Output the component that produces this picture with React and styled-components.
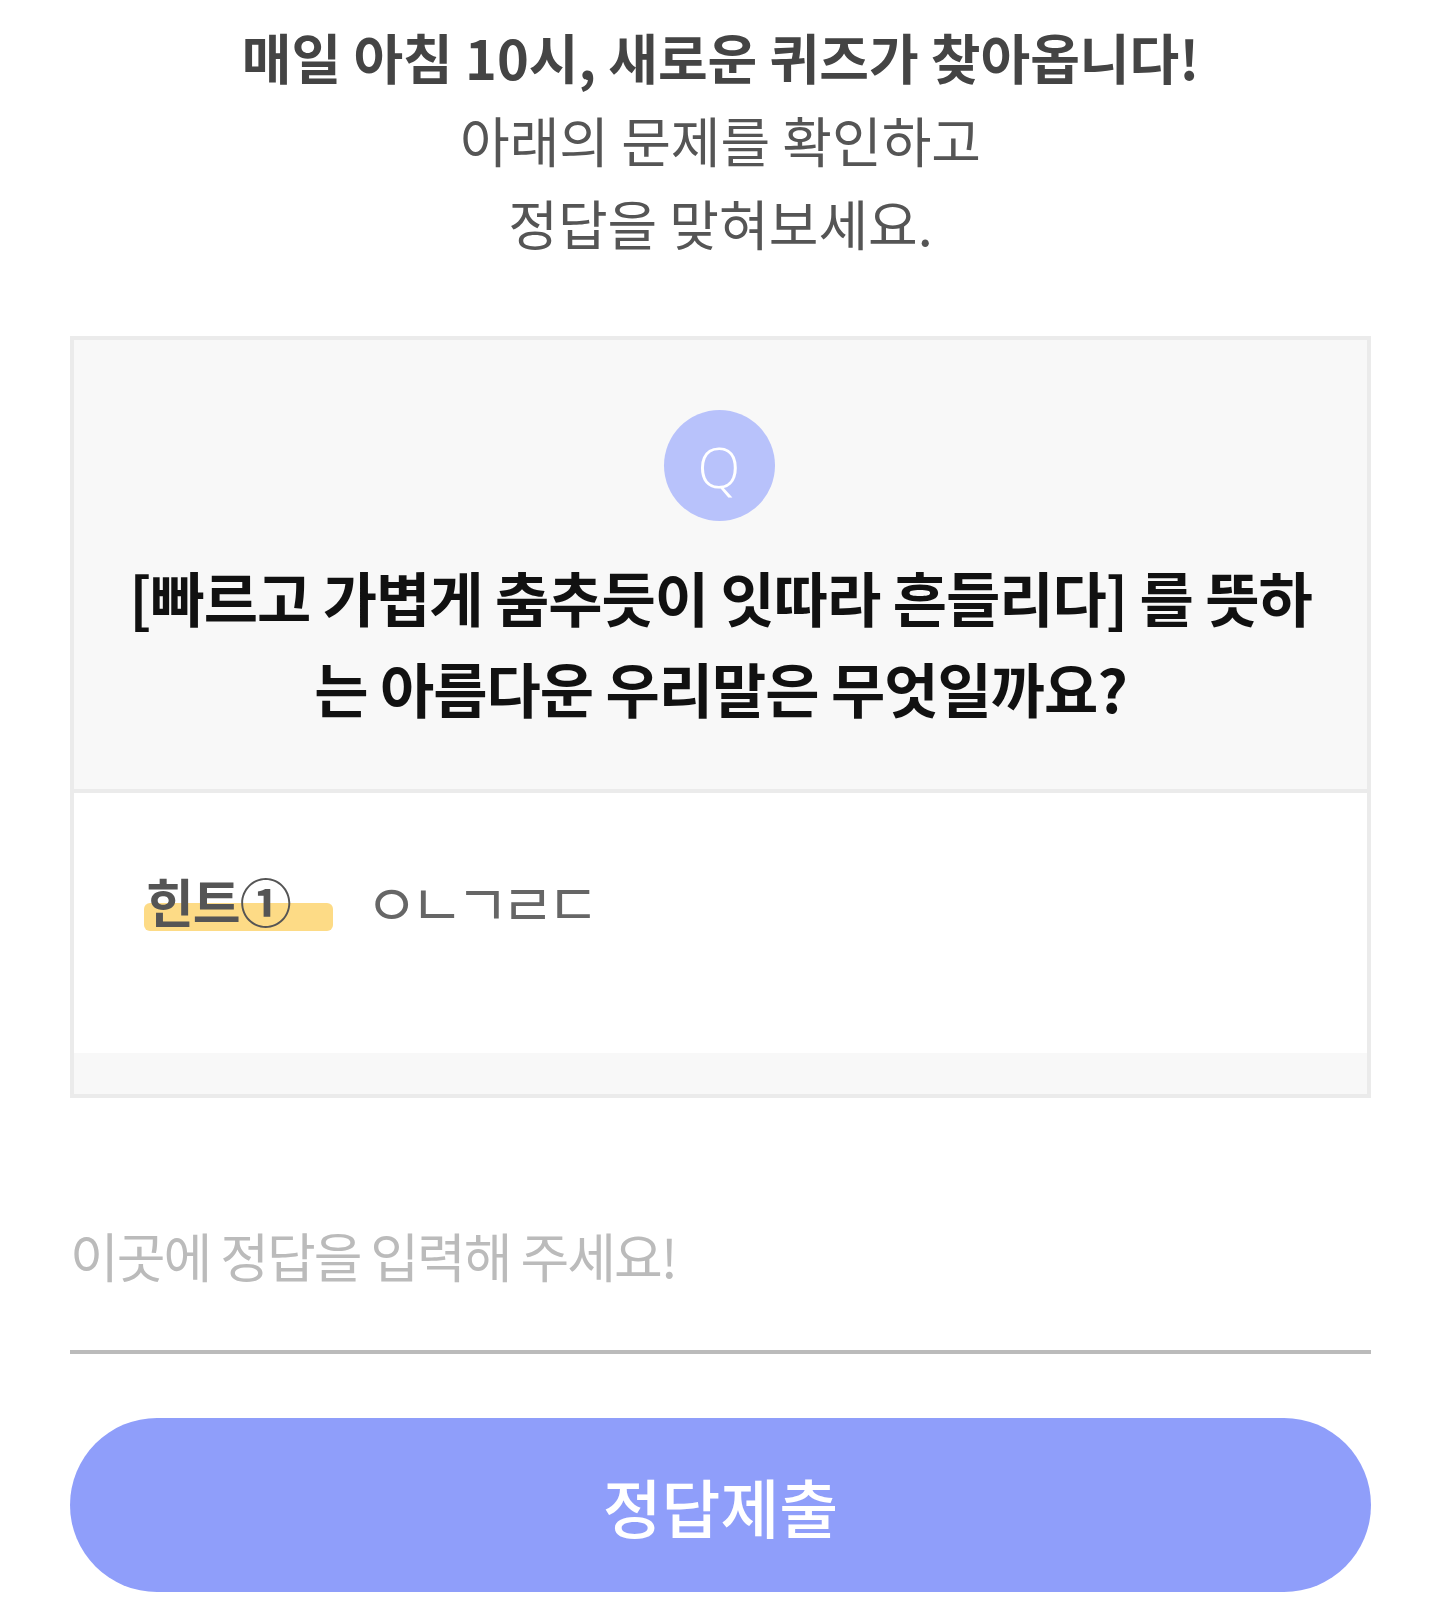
import styled, { createGlobalStyle } from "styled-components";

const GlobalStyle = createGlobalStyle`
  body {
    margin: 0;
    background: #ffffff;
    font-family: "Noto Sans CJK KR", "Noto Sans", sans-serif;
  }
`;

function App() {
  return (
    <>
      <GlobalStyle />
      <Page>
        <Intro>
          <h1>매일 아침 10시, 새로운 퀴즈가 찾아옵니다!</h1>
          <p>
            아래의 문제를 확인하고
            <br />
            정답을 맞혀보세요.
          </p>
        </Intro>

        <QuizCard>
          <QuestionArea>
            <QBadge>Q</QBadge>
            <QuestionText>
              [빠르고 가볍게 춤추듯이 잇따라 흔들리다] 를 뜻하는 아름다운 우리말은 무엇일까요?
            </QuestionText>
          </QuestionArea>
          <HintArea>
            <HintRow>
              <HintLabel>힌트①</HintLabel>
              <HintLetters>ㅇㄴㄱㄹㄷ</HintLetters>
            </HintRow>
          </HintArea>
          <CardFoot />
        </QuizCard>

        <AnswerInput type="text" placeholder="이곳에 정답을 입력해 주세요!" />
        <SubmitButton type="button">정답제출</SubmitButton>
      </Page>
    </>
  );
}

const Page = styled.div`
  display: flex;
  flex-direction: column;
  padding: 15px 68px 30px 70px;
`;

const Intro = styled.div`
  text-align: center;
  & h1 {
    margin: 0;
    font-size: 54px;
    line-height: 83px;
    font-weight: 700;
    color: #444444;
  }
  & p {
    margin: 0;
    font-size: 54px;
    line-height: 83px;
    font-weight: 400;
    color: #555555;
  }
`;

const QuizCard = styled.div`
  margin-top: 72px;
  border: 4px solid #ebebeb;
  background: #f8f8f8;
  display: flex;
  flex-direction: column;
`;

const QuestionArea = styled.div`
  display: flex;
  flex-direction: column;
  align-items: center;
  padding: 70px 50px 56px;
`;

const QBadge = styled.div`
  width: 111px;
  height: 111px;
  margin-right: 3px;
  border-radius: 50%;
  background: #b8c2fb;
  color: #ffffff;
  display: flex;
  align-items: center;
  justify-content: center;
  font-family: "Open Sans", "Noto Sans", sans-serif;
  font-weight: 300;
  font-size: 56px;
`;

const QuestionText = styled.p`
  margin: 30px 0 0;
  text-align: center;
  font-size: 59px;
  line-height: 91px;
  font-weight: 700;
  color: #111111;
  letter-spacing: -1px;
`;

const HintArea = styled.div`
  background: #ffffff;
  border-top: 4px solid #ebebeb;
  height: 264px;
  padding: 80px 70px 0;
  box-sizing: border-box;
`;

const HintRow = styled.div`
  display: flex;
  align-items: center;
  gap: 32px;
`;

const HintLabel = styled.span`
  position: relative;
  z-index: 0;
  width: 189px;
  padding-left: 2px;
  box-sizing: border-box;
  font-size: 52px;
  line-height: 56px;
  font-weight: 700;
  color: #555555;
  letter-spacing: -1px;
  &::before {
    content: "";
    position: absolute;
    z-index: -1;
    left: 0;
    right: 0;
    bottom: -2px;
    height: 28px;
    border-radius: 6px;
    background: #fddb86;
  }
`;

const HintLetters = styled.span`
  font-size: 58px;
  line-height: 56px;
  font-weight: 400;
  color: #666666;
  letter-spacing: -8px;
`;

const CardFoot = styled.div`
  height: 41px;
`;

const AnswerInput = styled.input`
  margin-top: 62px;
  height: 190px;
  padding: 0;
  border: none;
  border-bottom: 4px solid #bbbbbb;
  outline: none;
  background: transparent;
  font-family: "Noto Sans CJK KR", "Noto Sans", sans-serif;
  font-size: 53px;
  letter-spacing: -2px;
  color: #333333;
  &::placeholder {
    color: #bbbbbb;
  }
`;

const SubmitButton = styled.button`
  margin-top: 64px;
  height: 174px;
  border: none;
  border-radius: 87px;
  background: #8f9efa;
  color: #ffffff;
  font-family: "Noto Sans CJK KR", "Noto Sans", sans-serif;
  font-size: 64px;
  font-weight: 500;
  cursor: pointer;
`;

export default App;
